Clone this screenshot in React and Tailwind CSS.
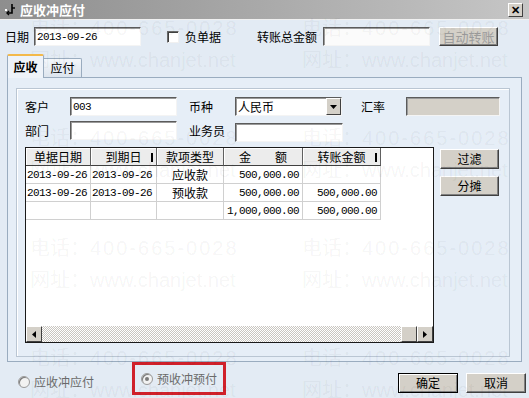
import React from 'react'

const COLS = [65, 66, 67, 79, 78]

const ROWS = [
  ['2013-09-26', '2013-09-26', '应收款', '500,000.00', ''],
  ['2013-09-26', '2013-09-26', '预收款', '500,000.00', '500,000.00'],
  ['', '', '', '1,000,000.00', '500,000.00'],
]

function Num({ children }) {
  return <span className="font-['Liberation_Mono'] text-[11px] tracking-[-0.6px]">{children}</span>
}

function Field({ className = '', children }) {
  return (
    <div className={`h-[19px] border border-t-[#5b5b5b] border-l-[#5b5b5b] border-r-[#f4f4f4] border-b-[#f4f4f4] shadow-[inset_1px_1px_0_#9a9a9a] flex items-center pl-[2px] overflow-hidden ${className}`}>
      {children}
    </div>
  )
}

function Btn({ children, className = '', disabled, dark }) {
  return (
    <div className={`flex items-center justify-center bg-[#d4d0c8] border ${dark ? 'border-black shadow-[inset_1px_1px_0_#fff,inset_-1px_-1px_0_#808080]' : 'border-t-white border-l-white border-r-[#404040] border-b-[#404040] shadow-[inset_-1px_-1px_0_#808080]'} ${disabled ? 'text-[#9c9c9c]' : 'text-black'} ${className}`}>
      {children}
    </div>
  )
}

function Watermark() {
  const block = (
    <div className="h-[110px] flex flex-col gap-[8px] text-[20px] leading-[24px] font-['Liberation_Sans','Noto_Sans_CJK_SC',sans-serif]">
      <div>电话：<span className="tracking-[2px]">400-665-0028</span></div>
      <div>网址：www.chanjet.net</div>
    </div>
  )
  return (
    <div className="absolute inset-0 pointer-events-none text-black/[0.05] overflow-hidden">
      <div className="flex pt-[16px] pl-[30px] gap-[62px]">
        <div className="w-[210px]">{block}{block}{block}{block}</div>
        <div className="w-[210px]">{block}{block}{block}{block}</div>
      </div>
    </div>
  )
}

export default function App() {
  return (
    <div className="relative w-[529px] h-[398px] overflow-hidden bg-[#e3ebf4] text-[12px] leading-[14px] text-black font-['Noto_Sans_CJK_SC',sans-serif]">
      {/* title bar */}
      <div className="h-[20px] flex items-center bg-gradient-to-r from-[#8e8e8e] to-[#c6c6c6] border-b border-b-[#f0f0f0]">
        <svg width="14" height="14" viewBox="0 0 14 14" className="ml-[4px]">
          <rect x="1" y="6" width="2" height="2" fill="#fff" />
          <path d="M8 1v9H4" stroke="#000" strokeWidth="1.6" fill="none" />
          <path d="M5 8l-2 2 2 2" stroke="#000" strokeWidth="1.4" fill="none" />
          <path d="M8 5h3" stroke="#000" strokeWidth="1.4" />
        </svg>
        <span className="ml-[2px] font-bold text-white text-[13px]">应收冲应付</span>
        <div className="ml-auto mr-[6px] w-[15px] h-[14px] flex items-center justify-center bg-[#d4d0c8] border border-t-white border-l-white border-r-[#404040] border-b-[#404040] text-[11px] font-bold leading-none">
          ✕
        </div>
      </div>

      {/* date row */}
      <div className="mt-[7px] h-[19px] flex items-center pl-[5px]">
        <span className="w-[29px]">日期</span>
        <Field className="w-[107px] bg-white"><Num>2013-09-26</Num></Field>
        <div className="ml-[26px] w-[12px] h-[12px] bg-white border border-t-[#6a6a6a] border-l-[#6a6a6a] border-r-[#f0f0f0] border-b-[#f0f0f0] shadow-[inset_1px_1px_0_#404040]" />
        <span className="ml-[6px]">负单据</span>
        <span className="ml-[36px] w-[66px]">转账总金额</span>
        <Field className="w-[107px] bg-[#fbfbfb]" />
        <Btn disabled className="ml-[9px] w-[59px] h-[19px] text-[13px]">自动转账</Btn>
      </div>

      {/* tabs */}
      <div className="mt-[8px] h-[23px] flex items-end pl-[7px]">
        <div className="relative z-10 w-[37px] h-[24px] -mb-[1px] flex items-center justify-center font-bold bg-[#eef3f9] border border-[#9aacbf] border-b-0 border-t-2 border-t-[#f3b94a] rounded-t-[2px]">
          应收
        </div>
        <div className="w-[38px] h-[19px] flex items-center justify-center bg-gradient-to-b from-[#f4f7fb] to-[#dde5ee] border border-[#9aacbf] border-l-0 border-b-0 rounded-tr-[2px]">
          应付
        </div>
      </div>

      {/* tab page */}
      <div className="ml-[7px] w-[515px] h-[285px] border border-[#9aacbf] bg-[#e6eef7] pt-[10px] pl-[8px]">
        <div className="w-[494px] h-[269px] border border-[#bac6d3] shadow-[inset_1px_1px_0_#fff] pt-[8px] pl-[8px]">
          <div className="h-[19px] flex items-center">
            <span className="w-[45px]">客户</span>
            <Field className="w-[107px] bg-white"><Num>003</Num></Field>
            <span className="ml-[12px] w-[46px]">币种</span>
            <Field className="w-[107px] bg-white justify-between pr-0">
              <span>人民币</span>
              <div className="w-[15px] h-[17px] flex items-center justify-center bg-[#d4d0c8] border border-t-white border-l-white border-r-[#404040] border-b-[#404040]">
                <svg width="7" height="4" viewBox="0 0 7 4"><path d="M0 0h7L3.5 4z" fill="#000" /></svg>
              </div>
            </Field>
            <span className="ml-[19px] w-[45px]">汇率</span>
            <Field className="w-[94px] bg-[#d4d0c8]" />
          </div>
          <div className="mt-[5px] h-[19px] flex items-center">
            <span className="w-[45px]">部门</span>
            <Field className="w-[107px] bg-white" />
            <span className="ml-[12px] w-[46px]">业务员</span>
            <Field className="w-[108px] bg-white mt-[3px]" />
          </div>

          <div className="mt-[7px] flex items-start">
            {/* grid */}
            <div className="w-[409px] h-[196px] border border-[#1a1a1a] bg-white flex flex-col">
              <div className="h-[18px] flex">
                {['单据日期', '到期日', '款项类型', '金　　额', '转账金额'].map((h, i) => (
                  <div
                    key={h}
                    style={{ width: COLS[i] }}
                    className="relative flex items-center justify-center bg-[#ececec] border-r border-r-[#606060] border-b border-b-[#404040] shadow-[inset_1px_1px_0_#fff]"
                  >
                    {h}
                    {(i === 1 || i === 4) && <span className="absolute right-[3px] top-[5px] w-[2px] h-[9px] bg-black" />}
                  </div>
                ))}
              </div>
              {ROWS.map((r, ri) => (
                <div key={ri} className="h-[18px] flex">
                  {r.map((c, i) => (
                    <div
                      key={i}
                      style={{ width: COLS[i] }}
                      className={`flex items-center border-r border-b border-[#d0d0d0] ${i === 2 ? 'justify-center' : i >= 3 ? 'justify-end pr-[3px]' : 'pl-[1px]'}`}
                    >
                      {i === 2 ? c : <Num>{c}</Num>}
                    </div>
                  ))}
                </div>
              ))}
              <div className="flex-1" />
              <div className="h-[16px] flex">
                <div className="w-[16px] h-[16px] flex items-center justify-center bg-[#d4d0c8] border border-t-white border-l-white border-r-[#404040] border-b-[#404040]">
                  <svg width="4" height="7" viewBox="0 0 4 7"><path d="M4 0v7L0 3.5z" fill="#000" /></svg>
                </div>
                <div className="flex-1 bg-[repeating-conic-gradient(#c9c6c0_0_25%,#ffffff_0_50%)] bg-[length:2px_2px]" />
                <div className="w-[16px] h-[16px] bg-[#d4d0c8] border border-t-white border-l-white border-r-[#404040] border-b-[#404040]" />
                <div className="w-[16px] h-[16px] flex items-center justify-center bg-[#d4d0c8] border border-t-white border-l-white border-r-[#404040] border-b-[#404040]">
                  <svg width="4" height="7" viewBox="0 0 4 7"><path d="M0 0v7L4 3.5z" fill="#000" /></svg>
                </div>
              </div>
            </div>
            <div className="ml-[6px] flex flex-col gap-[7px] pt-[2px]">
              <Btn className="w-[59px] h-[20px]">过滤</Btn>
              <Btn className="w-[59px] h-[20px]">分摊</Btn>
            </div>
          </div>
        </div>
      </div>

      {/* bottom row */}
      <div className="h-[36px] flex items-start">
        <div className="mt-[14px] ml-[18px] w-[12px] h-[12px] rounded-full bg-[#f2f2f2] border border-[#9a9a9a] shadow-[inset_1px_1px_0_#7a7a7a]" />
        <span className="mt-[13px] ml-[4px] text-[#6b6b6b]">应收冲应付</span>
        <div className="ml-[38px] w-[94px] h-[33px] border-[3px] border-[#d0202a] flex items-center">
          <div className="ml-[6px] w-[12px] h-[12px] rounded-full bg-[#f2f2f2] border border-[#9a9a9a] shadow-[inset_1px_1px_0_#7a7a7a] flex items-center justify-center">
            <div className="w-[4px] h-[4px] rounded-full bg-[#7a7a7a]" />
          </div>
          <span className="ml-[4px] text-[#6b6b6b]">预收冲预付</span>
        </div>
        <Btn dark className="mt-[11px] ml-[172px] w-[60px] h-[20px]">确定</Btn>
        <Btn className="mt-[11px] ml-[8px] w-[60px] h-[20px]">取消</Btn>
      </div>

      <Watermark />
    </div>
  )
}
